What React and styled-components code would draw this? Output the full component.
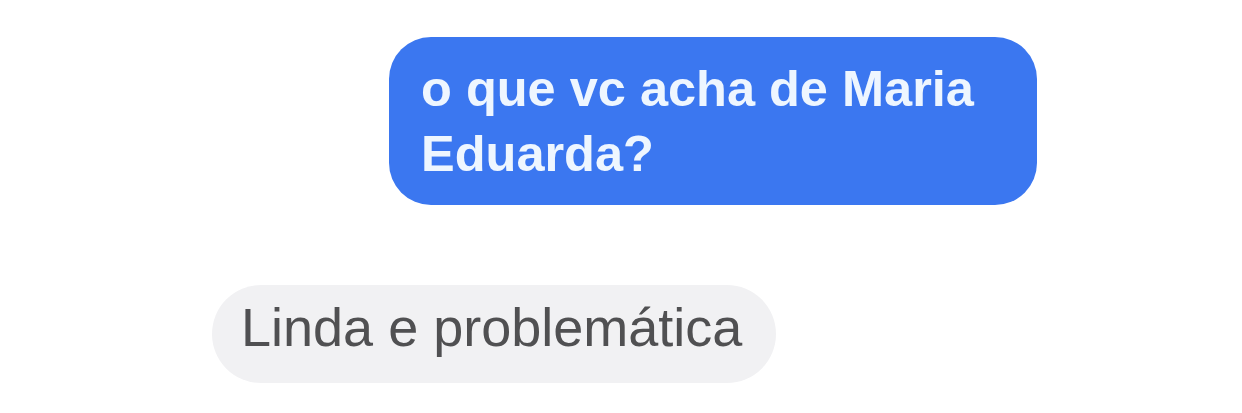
import React from "react";
import styled, { createGlobalStyle } from "styled-components";

const Global = createGlobalStyle`
  html, body { margin: 0; padding: 0; background: #ffffff; }
  body { font-family: "Liberation Sans", Arial, sans-serif; }
`;

const Thread = styled.div`
  display: flex;
  flex-direction: column;
  gap: 80px;
  padding: 37px 205px 0 212px;
  width: 1242px;
  height: 413px;
  box-sizing: border-box;
  overflow: hidden;
`;

const Bubble = styled.div`
  box-sizing: border-box;
  font-family: "Liberation Sans", Arial, sans-serif;
  align-self: ${(p) => (p.$mine ? "flex-end" : "flex-start")};
  background: ${(p) => (p.$mine ? "#3b77f0" : "#f1f1f3")};
  color: ${(p) => (p.$mine ? "#eef6ff" : "#505052")};
  font-weight: ${(p) => (p.$mine ? 700 : 400)};
`;

const Sent = styled(Bubble)`
  width: 648px;
  padding: 19px 30px 19px 32px;
  border-radius: 42px;
  font-size: 50.5px;
  line-height: 65px;
`;

const Received = styled(Bubble)`
  height: 98px;
  padding: 5px 34px 19px 29px;
  border-radius: 49px;
  font-size: 54px;
  line-height: 74px;
  white-space: nowrap;
`;

export default function App() {
  return (
    <>
      <Global />
      <Thread>
        <Sent $mine>o que vc acha de Maria Eduarda?</Sent>
        <Received>Linda e problemática</Received>
      </Thread>
    </>
  );
}
